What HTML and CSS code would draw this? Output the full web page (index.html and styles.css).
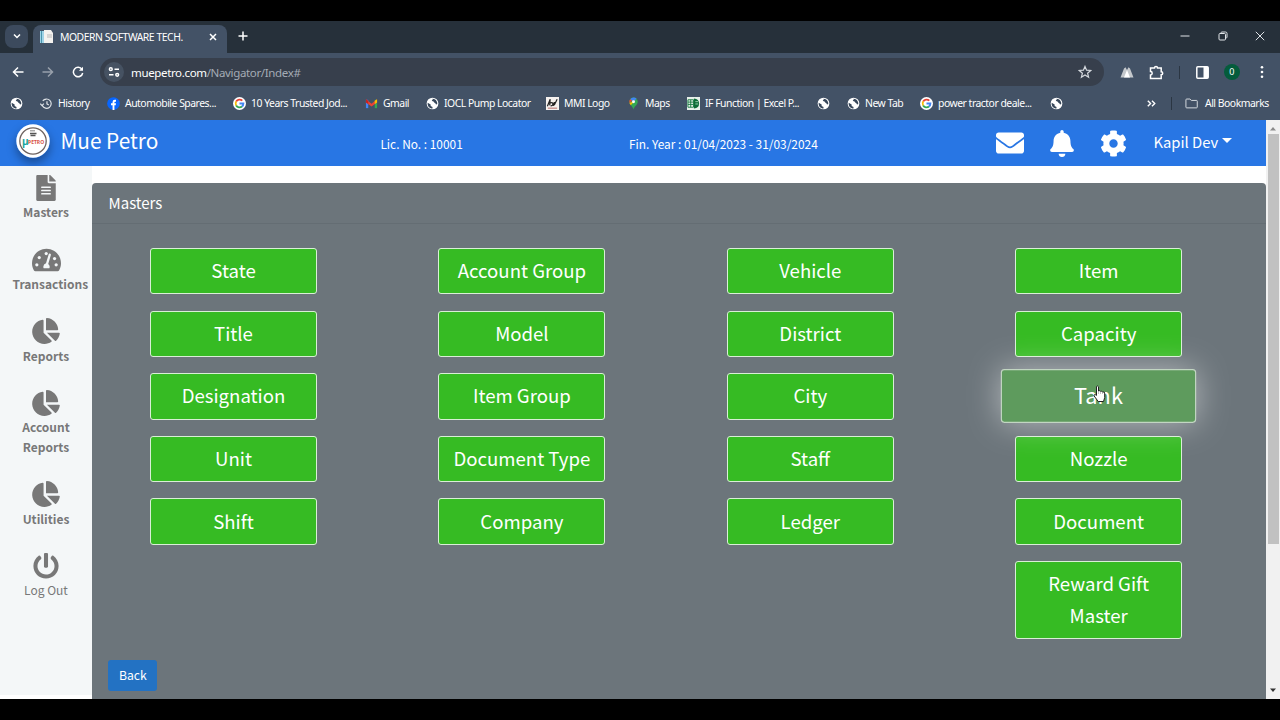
FILE: index.html
```html
<!DOCTYPE html>
<html lang="en">
<head>
<meta charset="utf-8">
<title>MODERN SOFTWARE TECH.</title>
<link rel="stylesheet" href="styles.css">
</head>
<body>

<svg class="sprite" width="0" height="0">
  <symbol id="globe" viewBox="0 0 14 14">
    <circle cx="7" cy="7" r="6.3" fill="#fff"/>
    <path d="M1.8 6.2l3.2 1.9v1.6l2 1.2v1.5C4 12.600 1.300 10 1.800 6.200zM7 1.800c1 1-.9 1.500-.7 2.300.3.900 1.900.3 2.200 1.300.3 1.200 1.700.8 1.900 2 .1.700 1 .8 1.700.2C12.600 5 10.200 1.600 7 1.800z" fill="#37475a"/>
  </symbol>
  <symbol id="google" viewBox="0 0 14 14">
    <circle cx="7" cy="7" r="7" fill="#fff"/>
    <g fill="none" stroke-width="2">
      <path d="M10 4A4.200 4.200 0 0 0 3.400 4.900" stroke="#ea4335"/>
      <path d="M3.400 4.900a4.200 4.200 0 0 0 0 4.200" stroke="#fbbc05"/>
      <path d="M3.400 9.100a4.200 4.200 0 0 0 6.300 1.100" stroke="#34a853"/>
      <path d="M9.700 10.200A4.200 4.200 0 0 0 11.200 7H7" stroke="#4285f4"/>
    </g>
  </symbol>
  <symbol id="pie" viewBox="0 0 544 512">
    <path d="M527.79 288H290.5l158.03 158.03c6.04 6.04 15.98 6.53 22.19.68 38.7-36.46 65.32-85.61 73.13-140.86 1.34-9.46-6.51-17.85-16.06-17.85zm-15.83-64.8C503.72 103.740 408.260 8.280 288.800.040 279.680-.590 272 7.100 272 16.240V240h223.770c9.140 0 16.820-7.680 16.190-16.800zM224 288V50.710c0-9.550-8.390-17.400-17.840-16.060C86.990 51.490-4.100 155.600.140 280.370 4.500 408.510 114.830 513.590 243.030 511.980c50.400-.630 96.970-16.870 135.260-44.030 7.900-5.600 8.420-17.230 1.570-24.080L224 288z"/>
  </symbol>
</svg>

<div class="browser">
  <div class="tabstrip">
    <div class="tab-search"><svg width="10" height="10" viewBox="0 0 10 10"><path d="M2 3.500l3 3 3-3" class="line"/></svg></div>
    <div class="tab">
      <svg width="14" height="14" viewBox="0 0 14 14"><path d="M0 1h4v12H0z" fill="#9fd3e6"/><path d="M1 1h1v12H1z" fill="#4a95ad"/><path d="M4 0h7l2 3v10H4z" fill="#f4f2ef"/><path d="M7 5h5M7 7h5" stroke="#b9b9b9"/></svg>
      <span class="tab-title">MODERN SOFTWARE TECH.</span>
      <svg width="8" height="8" viewBox="0 0 8 8"><path d="M1 1l6 6M7 1L1 7" class="line"/></svg>
    </div>
    <svg class="new-tab" width="10" height="10" viewBox="0 0 10 10"><path d="M5 .5v9M.5 5h9" class="line"/></svg>
    <div class="window-buttons">
      <svg width="10" height="10" viewBox="0 0 10 10"><path d="M.5 5h9" class="thin"/></svg>
      <svg width="10" height="10" viewBox="0 0 10 10"><rect x="1" y="2.500" width="6.500" height="6.500" rx="1" class="thin"/><path d="M3 2V1.800Q3 1 4 1h3.500Q9 1 9 2.500V6q0 1-.8 1" class="thin"/></svg>
      <svg width="10" height="10" viewBox="0 0 10 10"><path d="M.8.8l8.400 8.400M9.200.8L.8 9.200" class="thin"/></svg>
    </div>
  </div>

  <div class="toolbar">
    <svg class="nav-btn" width="12" height="12" viewBox="0 0 12 12"><path d="M11.500 6H1.500M6 1.500L1.500 6 6 10.500" class="line"/></svg>
    <svg class="nav-btn dim" width="12" height="12" viewBox="0 0 12 12"><path d="M.5 6h10M6 1.500L10.500 6 6 10.500" class="line"/></svg>
    <svg class="nav-btn" width="12" height="12" viewBox="0 0 12 12"><path d="M10 3.400A4.700 4.700 0 1 0 10.700 7" class="line"/><path d="M11 .7V4.800H6.900z" fill="#fff"/></svg>
    <div class="omnibox">
      <span class="site-info"><svg width="12" height="12" viewBox="0 0 12 12"><circle cx="2.800" cy="3.200" r="1.400" class="line"/><path d="M6.500 3.200H11M1 8.800h4.500" class="line"/><circle cx="9.200" cy="8.800" r="1.400" class="line"/></svg></span>
      <span class="url">muepetro.com<span>/Navigator/Index#</span></span>
      <svg class="star" width="14" height="14" viewBox="0 0 14 14"><path d="M7 1.400l1.600 3.800 4.100.3-3.100 2.700 1 4L7 10l-3.600 2.200 1-4L1.300 5.500l4.100-.3z" fill="none" stroke="#d5d9de" stroke-width="1.200"/></svg>
    </div>
    <div class="extensions">
      <svg width="14" height="14" viewBox="0 0 14 14"><path d="M.5 12.500L4 3.500l1.500-1.300L7 5l1.500-2.800L10 3.500l3.500 9z" fill="#c4c8cc"/><path d="M4 12.500L7 5l3 7.500z" fill="#fff"/></svg>
      <svg width="15" height="15" viewBox="0 0 15 15"><path d="M1.500 3h4a1.500 1.500 0 0 1 3 0h3.700v3.700a1.500 1.500 0 0 1 0 3v3.800H1.500V10a1.700 1.700 0 0 0 0-3.400z" class="line"/></svg>
      <i class="divider"></i>
      <svg width="13" height="13" viewBox="0 0 13 13"><rect x=".8" y=".8" width="11.400" height="11.400" rx="1" class="line"/><path d="M7.500 1H12v11H7.500z" fill="#fff"/></svg>
      <span class="avatar">0</span>
      <svg width="4" height="14" viewBox="0 0 4 14"><g fill="#fff"><circle cx="2" cy="2.300" r="1.300"/><circle cx="2" cy="7" r="1.300"/><circle cx="2" cy="11.700" r="1.300"/></g></svg>
    </div>
  </div>

  <div class="bookmarks">
    <a><svg><use href="#globe"/></svg></a>
    <a><svg viewBox="0 0 14 14"><path d="M2.600 9.500A5 5 0 1 0 3 4.200M.3 7.200l1.900 2 1.900-2M7.500 4.500v3l2 1.200" class="thin hist"/></svg>History</a>
    <a><svg viewBox="0 0 14 14"><circle cx="7" cy="7" r="6.800" fill="#0866ff"/><path d="M6 14V8.800H4.300V6.700H6V5.500Q6 3 8.400 3h1.300v2H8.800Q8 5 8 5.800v.9h1.700l-.3 2.100H8V14z" fill="#fff"/></svg>Automobile Spares...</a>
    <a><svg><use href="#google"/></svg>10 Years Trusted Jod...</a>
    <a><svg viewBox="0 0 14 14"><path d="M1 3h2.500v9H1z" fill="#4285f4"/><path d="M10.500 3H13v9h-2.500z" fill="#34a853"/><path d="M1 2.500l6 4.700 6-4.700V6L7 10.300 1 6z" fill="#ea4335"/><path d="M1 2.500L3.500 4v3.500L1 6z" fill="#c5221f"/><path d="M13 2.500L10.500 4v3.500L13 6z" fill="#fbbc04"/></svg>Gmail</a>
    <a><svg><use href="#globe"/></svg>IOCL Pump Locator</a>
    <a><svg viewBox="0 0 14 14"><path d="M0 0h14v14H0z" fill="#f5f1ef"/><path d="M1.500 10L4.500 2.500 4 9M4.500 6.500q3-1 3 1T5 9.500M8 9.500l1-4 .5 2L12 2.500" fill="none" stroke="#222" stroke-width="1.300"/><path d="M2 12h10" stroke="#b0615f"/></svg>MMI Logo</a>
    <a><svg viewBox="0 0 14 14"><path d="M7 .5a4.600 4.600 0 0 1 4.600 4.600C11.600 8.500 8 9.500 7 13.500 6 9.500 2.400 8.500 2.400 5.100A4.600 4.600 0 0 1 7 .5z" fill="#34a853"/><path d="M7 .5A4.600 4.600 0 0 0 3.400 2.300L7 5.300l3.300-3.700A4.600 4.600 0 0 0 7 .5z" fill="#4285f4"/><path d="M3.400 2.300A4.600 4.600 0 0 0 2.600 6.500L5.500 4z" fill="#ea4335"/><path d="M2.600 6.500q.5 1.200 1.500 2.400L8.500 4z" fill="#fbbc04"/><circle cx="7" cy="5" r="1.600" fill="#fff"/></svg>Maps</a>
    <a><svg viewBox="0 0 14 14"><path d="M0 0h14v14H0z" fill="#e8f0ea"/><path d="M7.500 1.500Q13 2 13 7t-5.500 5.500z" fill="#0d6b37"/><path d="M1 3h6v8H1zM1 5.500h6M1 8h6M4 3v8" fill="none" stroke="#187a42"/><path d="M9 5h3M9 7.500h3" stroke="#9cd3b0"/></svg>IF Function | Excel P...</a>
    <a><svg><use href="#globe"/></svg></a>
    <a><svg><use href="#globe"/></svg>New Tab</a>
    <a><svg><use href="#google"/></svg>power tractor deale...</a>
    <a><svg><use href="#globe"/></svg></a>
    <a class="more"><svg viewBox="0 0 14 14"><path d="M3 4l3 3-3 3M7.500 4l3 3-3 3" class="line"/></svg></a>
    <i class="divider"></i>
    <a class="all"><svg viewBox="0 0 14 14"><path d="M1 3q0-.8.800-.8h3.500l1.500 1.500h5.600q.8 0 .8.800v6.400q0 .8-.8.800H1.800q-.8 0-.8-.8z" class="thin"/></svg>All Bookmarks</a>
  </div>
</div>

<div class="page">
  <div class="app">
    <nav class="navbar">
      <div class="logo">
        <svg width="34" height="34" viewBox="0 0 34 34">
          <circle cx="17" cy="17" r="16.700" fill="#fff"/>
          <circle cx="17" cy="17" r="13.200" fill="#fff" stroke="#6d6361" stroke-width="1.300"/>
          <path d="M14 9.500h6.500M14.500 11.500h5" stroke="#555" stroke-width="1.500"/><path d="M14 6h5v1.500h-5z" fill="#aaa"/>
          <text x="6" y="21" class="logo-mu">µ</text>
          <text x="12" y="20" class="logo-text">PETRO</text>
        </svg>
      </div>
      <span class="brand">Mue Petro</span>
      <span class="licence">Lic. No. : 10001</span>
      <span class="fin-year">Fin. Year : 01/04/2023 - 31/03/2024</span>
      <div class="nav-icons">
        <svg width="28" height="28" viewBox="0 0 512 512"><path d="M502.300 190.800c3.900-3.100 9.700-.2 9.700 4.700V400c0 26.500-21.500 48-48 48H48c-26.500 0-48-21.500-48-48V195.600c0-5 5.700-7.800 9.700-4.700 22.400 17.400 52.100 39.500 154.100 113.600 21.100 15.400 56.700 47.800 92.200 47.600 35.700.3 72-32.800 92.300-47.600 102-74.100 131.600-96.300 154-113.700zM256 320c23.200.4 56.600-29.200 73.400-41.400 132.700-96.300 142.800-104.700 173.400-128.700 5.800-4.500 9.200-11.500 9.200-18.900v-19c0-26.500-21.500-48-48-48H48c-26.500 0-48 21.500-48 48v19c0 7.400 3.400 14.300 9.200 18.900 30.600 23.900 40.700 32.400 173.400 128.700 16.800 12.200 50.200 41.800 73.400 41.400z"/></svg>
        <svg width="24" height="27" viewBox="0 0 448 512"><path d="M224 512c35.320 0 63.970-28.650 63.970-64H160.030c0 35.350 28.650 64 63.970 64zm215.390-149.710c-19.320-20.760-55.470-51.990-55.470-154.290 0-77.700-54.480-139.900-127.940-155.160V32c0-17.670-14.320-32-31.980-32s-31.980 14.330-31.980 32v20.840C118.560 68.100 64.080 130.300 64.080 208c0 102.300-36.150 133.530-55.470 154.290-6 6.450-8.660 14.160-8.610 21.710.11 16.400 12.980 32 32.100 32h383.800c19.120 0 32-15.600 32.100-32 .05-7.550-2.610-15.270-8.610-21.710z"/></svg>
        <svg width="27" height="27" viewBox="0 0 512 512"><path d="M487.400 315.700l-42.600-24.600c4.300-23.200 4.300-47 0-70.200l42.600-24.600c4.900-2.800 7.100-8.600 5.500-14-11.100-35.600-30-67.800-54.700-94.600-3.800-4.100-10-5.100-14.800-2.300L380.800 110c-17.900-15.400-38.500-27.300-60.800-35.100V25.800c0-5.600-3.900-10.500-9.400-11.700-36.700-8.200-74.300-7.800-109.200 0-5.500 1.200-9.400 6.100-9.400 11.700V75c-22.200 7.900-42.800 19.800-60.800 35.100L88.700 85.500c-4.900-2.800-11-1.900-14.800 2.300-24.700 26.700-43.600 58.900-54.700 94.600-1.700 5.400.6 11.200 5.500 14L67.300 221c-4.300 23.200-4.300 47 0 70.200l-42.600 24.600c-4.900 2.800-7.100 8.600-5.500 14 11.100 35.600 30 67.800 54.700 94.600 3.800 4.100 10 5.100 14.800 2.300l42.600-24.600c17.900 15.400 38.500 27.300 60.800 35.100v49.200c0 5.600 3.900 10.500 9.400 11.700 36.700 8.200 74.300 7.800 109.200 0 5.500-1.200 9.400-6.100 9.400-11.700v-49.200c22.200-7.900 42.800-19.800 60.800-35.100l42.600 24.600c4.900 2.800 11 1.900 14.800-2.300 24.700-26.700 43.600-58.900 54.700-94.600 1.500-5.500-.7-11.300-5.600-14.100zM256 336c-44.100 0-80-35.900-80-80s35.900-80 80-80 80 35.900 80 80-35.900 80-80 80z"/></svg>
      </div>
      <span class="user">Kapil Dev</span>
    </nav>

    <div class="main">
      <div class="sidebar">
        <a class="side-item"><svg width="20" height="26" viewBox="0 0 384 512"><path d="M224 136V0H24C10.700 0 0 10.700 0 24v464c0 13.300 10.700 24 24 24h336c13.300 0 24-10.700 24-24V160H248c-13.200 0-24-10.800-24-24zm64 236c0 6.600-5.400 12-12 12H108c-6.600 0-12-5.400-12-12v-8c0-6.600 5.400-12 12-12h168c6.600 0 12 5.400 12 12v8zm0-64c0 6.600-5.400 12-12 12H108c-6.600 0-12-5.400-12-12v-8c0-6.600 5.400-12 12-12h168c6.600 0 12 5.400 12 12v8zm0-72v8c0 6.600-5.400 12-12 12H108c-6.600 0-12-5.400-12-12v-8c0-6.600 5.400-12 12-12h168c6.600 0 12 5.400 12 12zm96-114.100v6.100H256V0h6.100c6.400 0 12.500 2.500 17 7l97.900 98c4.500 4.500 7 10.600 7 16.900z"/></svg><span>Masters</span></a>
        <a class="side-item"><svg width="29" height="26" viewBox="0 0 576 512"><path d="M288 32C128.940 32 0 160.940 0 320c0 52.800 14.250 102.260 39.060 144.800 5.610 9.620 16.300 15.200 27.440 15.200h443c11.140 0 21.830-5.580 27.440-15.200C561.750 422.260 576 372.800 576 320c0-159.060-128.940-288-288-288z"/><g class="cut"><circle cx="96" cy="352" r="32"/><circle cx="144" cy="208" r="32"/><circle cx="282" cy="128" r="32"/><circle cx="448" cy="228" r="32"/><circle cx="480" cy="352" r="32"/><path d="M355 127q22 4 21 26l-54 180q28 24 30 56 0 16-8 32H232q-8-16-8-32 4-54 54-69l54-180q7-16 23-13z"/></g></svg><span>Transactions</span></a>
        <a class="side-item"><svg width="28" height="26"><use href="#pie"/></svg><span>Reports</span></a>
        <a class="side-item"><svg width="28" height="26"><use href="#pie"/></svg><span>Account<br>Reports</span></a>
        <a class="side-item"><svg width="28" height="26"><use href="#pie"/></svg><span>Utilities</span></a>
        <a class="side-item logout"><svg width="26" height="26" viewBox="0 0 512 512"><path d="M400 54.100c63 45 104 118.600 104 201.900 0 136.800-110.800 247.700-247.500 248C120 504.300 8.200 393 8 256.400 7.900 173.100 48.900 99.300 111.800 54.200c11.700-8.300 28-4.800 35 7.700L162.600 90c5.900 10.500 3.100 23.800-6.600 31-41.500 30.800-68 79.600-68 134.900-.1 92.300 74.500 168.100 168 168.100 91.600 0 168.600-74.200 168-169.100-.3-51.800-24.700-101.800-68.100-134-9.700-7.200-12.400-20.500-6.500-30.900l15.800-28.100c7-12.400 23.200-16.100 34.800-7.800zM296 264V24c0-13.300-10.700-24-24-24h-32c-13.300 0-24 10.700-24 24v240c0 13.300 10.700 24 24 24h32c13.300 0 24-10.700 24-24z"/></svg><span>Log Out</span></a>
      </div>

      <div class="card">
        <div class="card-header">Masters</div>
        <div class="card-body">
          <div class="column">
            <button>State</button>
            <button>Title</button>
            <button>Designation</button>
            <button>Unit</button>
            <button>Shift</button>
          </div>
          <div class="column">
            <button>Account Group</button>
            <button>Model</button>
            <button>Item Group</button>
            <button>Document Type</button>
            <button>Company</button>
          </div>
          <div class="column">
            <button>Vehicle</button>
            <button>District</button>
            <button>City</button>
            <button>Staff</button>
            <button>Ledger</button>
          </div>
          <div class="column">
            <button>Item</button>
            <button>Capacity</button>
            <button class="hover">Tank</button>
            <button>Nozzle</button>
            <button>Document</button>
            <button>Reward Gift Master</button>
          </div>
        </div>
        <a class="back">Back</a>
      </div>
    </div>
  </div>

  <div class="scrollbar">
    <svg width="8" height="5" viewBox="0 0 8 5"><path d="M1 4.500L4 1l3 3.500z" fill="#8b8b8b"/></svg>
    <div class="thumb"></div>
    <svg width="8" height="5" viewBox="0 0 8 5"><path d="M1 .5L4 4 7 .5z" fill="#333"/></svg>
  </div>
</div>

<svg class="cursor" width="14" height="18" viewBox="0 0 14 18"><path d="M3.500 1.500Q4.500.3 5.500 1.800V6q1.200-.8 2 .4 1.200-.6 2 .6 2-.5 2.200 1v4.500L10.500 16.500H5.200L1 10.800Q1 9 2.700 9.800l.8.600z" fill="#fff" stroke="#222"/><path d="M5.500 6v3M7.500 6.500V9M9.500 7v2" stroke="#999" stroke-width=".6"/></svg>

</body>
</html>
```
FILE: styles.css
```css
/* styles.css */

* {
  box-sizing: border-box;
}

body {
  margin: 0;
  width: 1280px;
  height: 720px;
  padding: 21px 0;
  overflow: hidden;
  background: #000;
  font-family: "Noto Sans CJK SC", "Noto Sans", sans-serif;
}

svg {
  display: block;
  flex: none;
}

.sprite {
  position: absolute;
}

.line {
  fill: none;
  stroke: #fff;
  stroke-width: 1.5;
}

.thin {
  fill: none;
  stroke: #dfe3e7;
  stroke-width: 1;
}

/* browser */

.browser {
  height: 99px;
  background: #435266;
  color: #fff;
  font-family: "Noto Sans", sans-serif;
  font-size: 11px;
}

.tabstrip {
  height: 32px;
  padding-bottom: 2px;
  display: flex;
  align-items: center;
  background: #26303a;
}

.tab-search {
  width: 23px;
  height: 23px;
  margin: 0 5px;
  display: flex;
  align-items: center;
  justify-content: center;
  border-radius: 8px;
  background: #3c4a5d;
}

.tab {
  width: 194px;
  height: 28px;
  margin-top: 6px;
  padding: 0 10px 4px 7px;
  display: flex;
  align-items: center;
  border-radius: 8px 8px 0 0;
  background: #435266;
}

.tab-title {
  flex: 1;
  margin-left: 6px;
  white-space: nowrap;
  font-size: 10.4px;
  letter-spacing: -.46px;
}

.new-tab {
  margin-left: 11px;
}

.window-buttons {
  margin-left: auto;
  padding-right: 15px;
  display: flex;
  gap: 27.500px;
}

.toolbar {
  height: 38px;
  padding: 0 16px 0 12px;
  display: flex;
  align-items: center;
}

.nav-btn {
  margin-right: 18px;
}

.dim {
  opacity: .45;
}

.omnibox {
  width: 1004px;
  height: 28px;
  margin-left: -2px;
  padding: 0 12px 0 4px;
  display: flex;
  align-items: center;
  border-radius: 14px;
  background: #373f4c;
}

.site-info {
  width: 20px;
  height: 20px;
  margin-right: 7px;
  display: flex;
  align-items: center;
  justify-content: center;
  border-radius: 50%;
  background: #465262;
}

.url {
  flex: 1;
  font-size: 11.500px;
  letter-spacing: -.35px;
}

.url span {
  color: #a4abb5;
}

.extensions {
  flex: 1;
  margin-left: 16px;
  display: flex;
  align-items: center;
  justify-content: space-between;
}

.divider {
  width: 1px;
  height: 13px;
  background: #2b3643;
}

.avatar {
  width: 16px;
  height: 16px;
  margin-right: 5px;
  border-radius: 50%;
  background: #045c3c;
  font-size: 9px;
  line-height: 16px;
  text-align: center;
}

.bookmarks {
  height: 29px;
  padding: 0 0 5px 10px;
  display: grid;
  grid-template-columns: 30px 67px 126px 132px 61px 120px 81px 60px 130px 30px 73px 130px 95px 26px 14px 85px;
  align-items: center;
  font-size: 10.4px;
}

.bookmarks a {
  display: flex;
  align-items: center;
  gap: 5px;
  white-space: nowrap;
  letter-spacing: -.48px;
}

.bookmarks a.all {
  gap: 7px;
}

.bookmarks svg {
  width: 13px;
  height: 13px;
}

.bookmarks .hist {
  stroke-width: 1.3;
}

/* page */

.page {
  height: 579px;
  display: flex;
  background: #fff;
}

.app {
  width: 1266px;
}

.navbar {
  height: 46px;
  display: flex;
  align-items: center;
  background: #2876e4;
  color: #fff;
  white-space: nowrap;
}

.logo {
  width: 34px;
  height: 34px;
  margin: -4px 10px 0 16.400px;
  border-radius: 50%;
  box-shadow: 0 5px 10px rgba(0,0,0,.35);
}

.logo-mu {
  fill: #1aa6a0;
  font: bold 10px "Open Sans", sans-serif;
}

.logo-text {
  fill: #d8513f;
  font: bold 5px "Open Sans", sans-serif;
}

.brand {
  width: 320px;
  margin-top: -7px;
  font-size: 20.800px;
  line-height: 30px;
}

.licence,
.fin-year {
  font-size: 11.900px;
  line-height: 18px;
  margin-top: 2px;
}

.licence {
  width: 248.500px;
}

.nav-icons {
  width: 157.500px;
  margin-left: 367px;
  display: flex;
  align-items: center;
  gap: 26px;
  fill: #fff;
}

.fin-year {
  width: 0;
}

.user {
  margin-top: -3px;
  display: flex;
  align-items: center;
  font-size: 14.800px;
  line-height: 22px;
}

.user::after {
  content: "";
  margin: 0 0 2px 4px;
  border: 5px solid transparent;
  border-top-color: #fff;
  border-bottom: 0;
}

.main {
  height: 533px;
  display: flex;
}

.sidebar {
  width: 92px;
  height: 529px;
  padding: 9px 12.500px 0;
  background: #f4f7f8;
}

.side-item {
  margin-bottom: 24.200px;
  display: block;
  fill: #787878;
  color: #787878;
  font-size: 12px;
  font-weight: bold;
  line-height: 20px;
  text-align: center;
}

.side-item svg {
  margin: 0 auto 1.400px;
}

.side-item span {
  display: block;
}

.side-item .cut {
  fill: #f4f7f8;
}

.logout {
  font-weight: normal;
}

.card {
  flex: 1;
  margin-top: 16.500px;
  border-radius: 4px 4px 0 0;
  background: #6c757b;
  color: #fff;
}

.card-header {
  height: 41px;
  padding: 0 16.500px;
  border-bottom: 1px solid #646d73;
  font-size: 15px;
  line-height: 40px;
}

.card-body {
  height: 436px;
  padding: 24.500px 0 0 58px;
  display: flex;
  gap: 121.400px;
}

.column {
  width: 167px;
  display: flex;
  flex-direction: column;
  gap: 16.200px;
}

button {
  padding: 5.300px 12px 7.700px;
  border: 1px solid #d9efd6;
  border-radius: 3px;
  background: #36bb23;
  color: #fff;
  font-family: inherit;
  font-size: 18.600px;
  line-height: 31.400px;
}

button.hover {
  position: relative;
  z-index: 1;
  transform: scale(1.17);
  border-color: #c2d6c2;
  background: #5e9b5d;
  box-shadow: 0 0 28px rgba(255,255,255,.5);
}

.back {
  width: 49px;
  height: 31px;
  margin-left: 16.400px;
  display: block;
  border-radius: 3px;
  background: #2372c3;
  font-size: 12.200px;
  line-height: 31px;
  text-align: center;
}

.scrollbar {
  width: 14px;
  padding: 6px 2px;
  display: flex;
  flex-direction: column;
  align-items: center;
  background: #f1f1f1;
}

.scrollbar .thumb {
  width: 11px;
  height: 410px;
  margin: 3px 0 auto;
  background: #c1c1c1;
}

.cursor {
  position: absolute;
  z-index: 2;
  left: 1093px;
  top: 385px;
}
```
